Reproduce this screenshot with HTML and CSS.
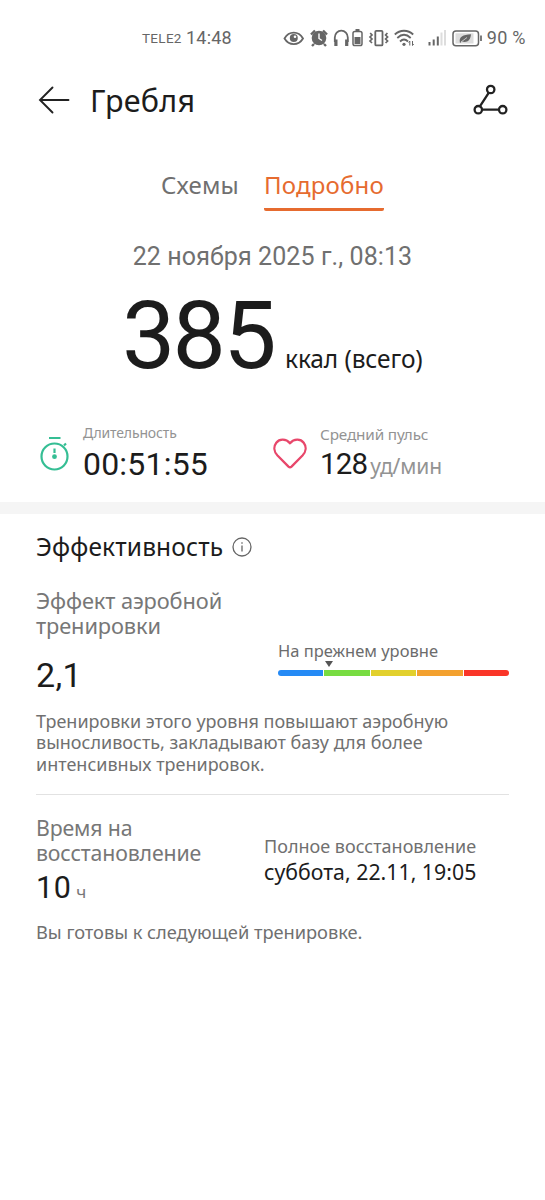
FILE: index.html
```
<!DOCTYPE html>
<html lang="ru">
<head>
<meta charset="utf-8">
<title>Гребля</title>
<link rel="stylesheet" href="styles.css">
</head>
<body>
<div class="status">
  <span class="carrier">TELE2</span>
  <span class="clock">14:48</span>
  <svg class="status-icons" width="200" height="22" viewBox="283 27 200 22" fill="none" stroke="#666" stroke-width="1.8">
    <path d="M284.5 38.5C289 30.6 298.500 30.600 303 38.500C298.500 46 289 46 284.500 38.500Z"/>
    <circle cx="293.800" cy="38" r="4" fill="#666" stroke="none"/><circle cx="295" cy="36.800" r="1.300" fill="#fff" stroke="none"/>
    <circle cx="319" cy="38" r="7.300" fill="#666" stroke="none"/>
    <path d="M311 34.500L315 30.500M327 34.500L323 30.500M314 44L312 46M324 44L326 46" stroke-width="2.400"/>
    <path d="M319 33.500V38.500L322 40.500" stroke="#fff" stroke-width="1.400"/>
    <path d="M334.800 42V37.500A6.500 6.800 0 0 1 347.800 37.500V42"/>
    <path d="M335.900 39.500V46M346.700 39.500V46" stroke-width="3.200"/>
    <rect x="353" y="31.500" width="9" height="14" rx="1.800" stroke-width="1.500"/>
    <path d="M355.500 30H359.500" stroke-width="2"/><path d="M354.500 37H360.500V44H354.500Z" fill="#666" stroke="none"/>
    <rect x="375.300" y="30.800" width="7.200" height="14.600" rx="1"/>
    <path d="M370.200 33L372 35L370 37L372 39L370 41L372 43M387.400 33L385.600 35L387.600 37L385.600 39L387.600 41L385.600 43" stroke-width="1.700"/>
    <path d="M394.800 34.500C400 29.500 408 29.500 413.200 34.500M397.300 38C401.500 34 406.500 34 410.700 38M400 41.500C402.500 39 405.500 39 408 41.500"/>
    <circle cx="404" cy="44.300" r="1.600" fill="#666" stroke="none"/>
    <path d="M409.800 41V45.500M408.600 42.500L409.800 41M412.500 41V45.500L413.700 44" stroke-width="1"/>
    <path d="M429.500 42V45.500M433.700 39.500V45.500M437.800 36.500V45.500" stroke-width="2"/>
    <path d="M441.500 32.500V45.500M445 30V45.500" stroke="#ddd" stroke-width="2"/>
    <rect x="453" y="31" width="25.500" height="14.800" rx="3" stroke-width="1.500"/>
    <rect x="455.500" y="33.300" width="18" height="10.200" fill="#ddd" stroke="none"/>
    <path d="M460 43C458.500 36.500 463 34.800 471 34.200C470.500 40.500 467 43 461.800 41.500L460 43Z" fill="#666" stroke="none"/>
    <path d="M461 42L467 37.500" stroke="#ddd" stroke-width=".8"/>
    <path d="M481 35.500V41" stroke-width="1.700"/>
  </svg>
  <span class="clock">90 %</span>
</div>

<header class="header">
  <svg width="32" height="30" viewBox="0 0 32 30" fill="none" stroke="#222" stroke-width="1.900" stroke-linecap="round"><path d="M2.500 15H30.500M14.500 2.500L2 15L14.500 27.500"/></svg>
  <h1 class="title">Гребля</h1>
  <svg class="share" width="36" height="34" viewBox="0 0 36 34" fill="none" stroke="#222" stroke-width="2.300"><path d="M16.700 9.800L8.200 22.800M10.300 26.700H26.700"/><circle cx="18.700" cy="6.500" r="3.700"/><circle cx="6.300" cy="26.700" r="3.700"/><circle cx="30.700" cy="26.700" r="3.700"/></svg>
</header>

<nav class="tabs"><span class="tab">Схемы</span><span class="tab active">Подробно</span></nav>

<div class="date">22 ноября 2025 г., 08:13</div>
<div class="total"><span class="total-value">385</span><span class="total-unit">ккал (всего)</span></div>

<section class="stats">
  <div class="stat">
    <svg width="30" height="36" viewBox="0 0 30 36" fill="none" stroke="#35be94" stroke-width="2.200"><path d="M9 2H20.500M24 9.500L26 7.500"/><circle cx="14.500" cy="20.500" r="13"/><path d="M14.500 12.500V17"/><circle cx="14.500" cy="20.700" r="2.400" fill="#35be94" stroke="none"/></svg>
    <div><div class="stat-label">Длительность</div><div class="stat-value duration">00:51:55</div></div>
  </div>
  <div class="stat">
    <svg class="heart" width="34" height="32" viewBox="0 0 34 32" fill="none" stroke="#e8476b" stroke-width="2.300" stroke-linejoin="round"><path d="M17 5.300C13 .6 6.500 .6 3.300 4.700C.3 8.700 1 13.800 4.500 17.500L15.500 28.600Q17 30 18.500 28.600L29.500 17.500C33 13.800 33.700 8.700 30.700 4.700C27.500 .6 21 .6 17 5.300Z"/></svg>
    <div><div class="stat-label pulse-label">Средний пульс</div><div class="stat-value pulse">128<span class="stat-unit">уд/мин</span></div></div>
  </div>
</section>

<main class="details">
  <div class="heading"><h2 class="heading-text">Эффективность</h2>
    <svg width="20" height="20" viewBox="0 0 20 20" fill="none" stroke="#666" stroke-width="1.300"><circle cx="10" cy="10" r="9"/><path d="M10 8.500V14.500M10 5.300V6.700"/></svg>
  </div>
  <section class="block aerobic">
    <div class="left">
      <div class="name">Эффект аэробной<br>тренировки</div>
      <div class="score">2,1</div>
    </div>
    <div class="level">
      <div class="level-label">На прежнем уровне</div>
      <div class="pointer"></div>
      <div class="scale"><i class="blue"></i><i class="green"></i><i class="yellow"></i><i class="orange"></i><i class="red"></i></div>
    </div>
  </section>
  <p class="text">Тренировки этого уровня повышают аэробную<br>выносливость, закладывают базу для более<br>интенсивных тренировок.</p>
  <section class="block recovery">
    <div class="left">
      <div class="name recovery-name">Время на<br>восстановление</div>
      <div class="hours">10<span class="hours-unit">ч</span></div>
    </div>
    <div class="full">
      <div class="full-label">Полное восстановление</div>
      <div class="full-value">суббота, 22.11, 19:05</div>
    </div>
  </section>
  <p class="text ready">Вы готовы к следующей тренировке.</p>
</main>
</body>
</html>
```
FILE: styles.css
```
* { box-sizing: border-box; }
body { margin: 0; background: #fff; color: #1c1c1c; font-family: "Noto Sans", sans-serif; font-weight: 400; }
h1, h2, p { margin: 0; font-weight: 400; }
svg { display: block; flex: none; }

.status { display: flex; align-items: center; height: 79px; padding: 0 0 3px 142px; color: #666; white-space: nowrap; }
.carrier { width: 44px; font: 13.500px/18px Roboto, sans-serif; letter-spacing: .3px; }
.clock { font: 18px/20px Roboto, sans-serif; letter-spacing: .2px; }
.status-icons { margin: 0 4px 0 51px; }

.header { display: flex; align-items: center; height: 42px; padding: 0 37px 0 38px; }
.title { margin-left: 20px; font-size: 30.500px; line-height: 40px; letter-spacing: .3px; }
.share { margin: 0 0 0 auto; }

.tabs { display: flex; justify-content: center; gap: 25px; margin-top: 48px; color: #707070; font-size: 24px; line-height: 32px; }
.tab { height: 42px; letter-spacing: .2px; }
.active { color: #e66b2f; border-bottom: 3px solid #e66b2f; border-radius: 0 0 2px 2px; }

.date { margin-top: 31px; text-align: center; color: #707070; font: 400 25px/30px Roboto, sans-serif; letter-spacing: .1px; }
.total { display: flex; align-items: baseline; height: 80px; margin-top: 24px; padding-left: 122px; }
.total-value { width: 163px; font: 400 95px/80px Roboto, sans-serif; letter-spacing: -2.8px; }
.total-unit { font-size: 24.500px; line-height: 30px; letter-spacing: -.1px; }

.stats { display: grid; grid-template-columns: 234px 1fr; height: 138px; padding: 48px 0 0 40px; border-bottom: 12px solid #f5f5f5; }
.stat { display: flex; gap: 13px; }
.stat > svg { margin-top: 12px; }
.stat > .heart { margin: 14px 0 0 -1px; }
.stat-label { color: #939393; font-size: 14px; line-height: 18px; letter-spacing: -.15px; }
.pulse-label { padding-top: 1px; font-size: 15.300px; letter-spacing: -.15px; }
.stat-value { margin-top: 4px; font: 400 32px/36px Roboto, sans-serif; letter-spacing: .2px; }
.pulse { margin-top: 3px; font-size: 29.500px; letter-spacing: -.8px; }
.stat-unit { margin-left: 3px; color: #939393; font: 400 21px/24px "Noto Sans", sans-serif; letter-spacing: -.1px; }

.details { padding: 18px 36px 0; }
.heading { display: flex; align-items: center; gap: 9px; height: 30px; }
.heading-text { font-size: 24.500px; line-height: 30px; letter-spacing: .15px; }
.block { display: flex; }
.aerobic { margin-top: 26px; }
.left { width: 242px; }
.name { color: #777; font-size: 21.800px; line-height: 25px; letter-spacing: -.1px; }
.recovery-name { font-size: 21.300px; letter-spacing: -.15px; }
.score { margin-top: 17px; font: 400 34px/40px Roboto, sans-serif; letter-spacing: .3px; }
.level { width: 231px; padding-top: 53px; }
.level-label { color: #6c6c6c; font-size: 16.500px; line-height: 20px; }
.pointer { width: 8px; height: 6px; margin: 0 0 3px 47px; background: #555; clip-path: polygon(0 0, 100% 0, 50% 100%); }
.scale { display: grid; grid-template-columns: repeat(5, 1fr); gap: 1px; height: 6px; border-radius: 3px; overflow: hidden; }
.blue { background: #258af5; }
.green { background: #78dc42; }
.yellow { background: #e2d02d; }
.orange { background: #f3a12f; }
.red { background: #fa3528; }
.text { margin-top: 16px; color: #707070; font-size: 18px; line-height: 21.300px; white-space: nowrap; }
.recovery { margin-top: 19px; padding-top: 20px; border-top: 1px solid #e2e2e2; }
.recovery .left { width: 228px; }
.hours { margin-top: 5px; height: 36px; font: 400 30.500px/36px Roboto, sans-serif; letter-spacing: .5px; }
.hours-unit { margin-left: 5px; color: #777; font: 400 17px/20px "Noto Sans", sans-serif; }
.full { padding-top: 19px; white-space: nowrap; }
.full-label { color: #707070; font-size: 18px; line-height: 24px; }
.full-value { font-size: 21.300px; line-height: 28px; }
.ready { margin-top: 14px; font-size: 18.300px; line-height: 24px; letter-spacing: -.04px; }
```
